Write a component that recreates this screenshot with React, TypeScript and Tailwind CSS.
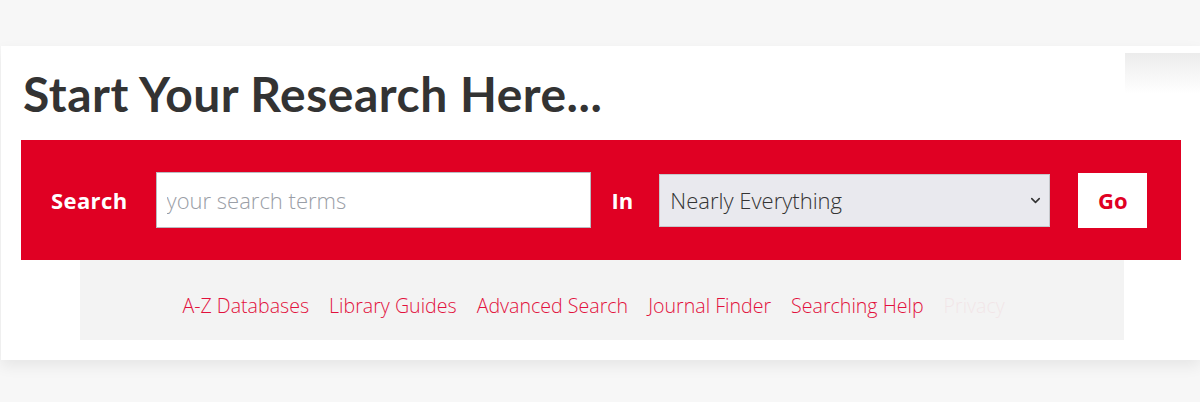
import { ChevronDown } from 'lucide-react';

const links = ['A-Z Databases', 'Library Guides', 'Advanced Search', 'Journal Finder', 'Searching Help'];

export default function App() {
  return (
    <div className="min-h-[402px] bg-[#f7f7f7] pt-[46px] font-['Open_Sans',sans-serif]">
      <div className="relative ml-px h-[314px] bg-white shadow-[0_6px_14px_rgba(0,0,0,0.07)]">
        {/* faded box top right */}
        <div className="absolute right-0 top-[7px] h-[40px] w-[75px] bg-gradient-to-b from-[#ececec] to-white" />

        <h1 className="pl-[22px] pt-[24px] pb-[22px] font-['Lato',sans-serif] text-[48px] font-bold leading-[48px] tracking-[0.5px] text-[#333333]">
          Start Your Research Here...
        </h1>

        <form className="ml-[20px] flex h-[120px] w-[1160px] items-center bg-[#e00023] pl-[30px]">
          <label className="mr-[28px] text-[22px] font-bold tracking-[0.4px] text-white">Search</label>
          <input
            type="text"
            placeholder="your search terms"
            className="h-[56px] w-[435px] border border-[#b9bcc2] bg-white px-[10px] text-[22px] font-light text-[#333] placeholder:text-[#9a9ea6] outline-none"
          />
          <span className="ml-[21px] mr-[26px] text-[22px] font-bold text-white">In</span>
          <div className="relative">
            <select className="h-[53px] w-[391px] appearance-none border border-[#c6c8cc] bg-[#e9e9ee] px-[10px] text-[22px] font-light text-[#333] outline-none">
              <option>Nearly Everything</option>
            </select>
            <ChevronDown className="pointer-events-none absolute right-[7px] top-[19px] h-[15px] w-[15px] text-[#333]" strokeWidth={2.5} />
          </div>
          <button type="button" className="ml-[28px] h-[55px] w-[69px] bg-white text-[22px] font-bold text-[#e00023]">
            Go
          </button>
        </form>

        <div className="ml-[79px] flex h-[80px] w-[1044px] items-center justify-center gap-[20px] bg-[#f3f3f3] pt-[11px]">
          {links.map((l) => (
            <a key={l} href="#" className="text-[19.6px] font-light text-[#e2103c]">
              {l}
            </a>
          ))}
          <span className="w-[78px] text-[19.6px] font-light text-[#e2103c] opacity-[0.06]">Privacy</span>
        </div>
      </div>
    </div>
  );
}
